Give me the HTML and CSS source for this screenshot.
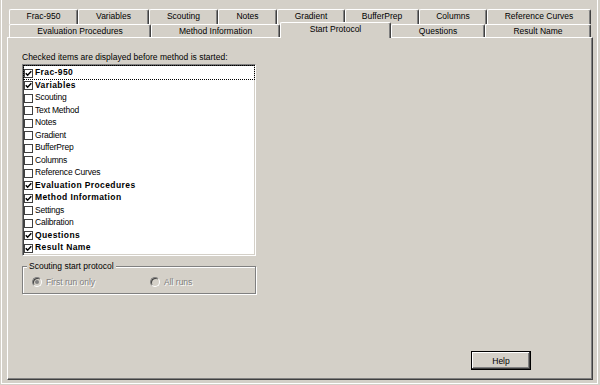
FILE: index.html
```html
<!DOCTYPE html>
<html>
<head>
  <title>Method Settings - Start Protocol</title>
  <link rel="stylesheet" href="styles.css">
</head>
<body>
  <div class="window">
    <div class="frame">

      <!-- Tab strip: back row first, the row holding the selected tab sits against the panel -->
      <div class="tabs">
        <div class="tab-row row-back">
          <div class="tab">Frac-950</div>
          <div class="tab">Variables</div>
          <div class="tab">Scouting</div>
          <div class="tab">Notes</div>
          <div class="tab">Gradient</div>
          <div class="tab">BufferPrep</div>
          <div class="tab">Columns</div>
          <div class="tab">Reference Curves</div>
        </div>
        <div class="tab-row row-front">
          <div class="tab">Evaluation Procedures</div>
          <div class="tab">Method Information</div>
          <div class="tab selected">Start Protocol</div>
          <div class="tab">Questions</div>
          <div class="tab">Result Name</div>
        </div>
      </div>

      <div class="panel">
        <div class="caption">Checked items are displayed before method is started:</div>

        <div class="listbox">
          <div class="item checked focused"><span class="check"><svg viewBox="0 0 7 7" width="7" height="7"><polyline points="0.8,3.2 2.6,5.2 6.3,1.2" fill="none" stroke="#000" stroke-width="1.5"/></svg></span><span class="label">Frac-950</span></div>
          <div class="item checked"><span class="check"><svg viewBox="0 0 7 7" width="7" height="7"><polyline points="0.8,3.2 2.6,5.2 6.3,1.2" fill="none" stroke="#000" stroke-width="1.5"/></svg></span><span class="label">Variables</span></div>
          <div class="item"><span class="check"></span><span class="label">Scouting</span></div>
          <div class="item"><span class="check"></span><span class="label">Text Method</span></div>
          <div class="item"><span class="check"></span><span class="label">Notes</span></div>
          <div class="item"><span class="check"></span><span class="label">Gradient</span></div>
          <div class="item"><span class="check"></span><span class="label">BufferPrep</span></div>
          <div class="item"><span class="check"></span><span class="label">Columns</span></div>
          <div class="item"><span class="check"></span><span class="label">Reference Curves</span></div>
          <div class="item checked"><span class="check"><svg viewBox="0 0 7 7" width="7" height="7"><polyline points="0.8,3.2 2.6,5.2 6.3,1.2" fill="none" stroke="#000" stroke-width="1.5"/></svg></span><span class="label">Evaluation Procedures</span></div>
          <div class="item checked"><span class="check"><svg viewBox="0 0 7 7" width="7" height="7"><polyline points="0.8,3.2 2.6,5.2 6.3,1.2" fill="none" stroke="#000" stroke-width="1.5"/></svg></span><span class="label">Method Information</span></div>
          <div class="item"><span class="check"></span><span class="label">Settings</span></div>
          <div class="item"><span class="check"></span><span class="label">Calibration</span></div>
          <div class="item checked"><span class="check"><svg viewBox="0 0 7 7" width="7" height="7"><polyline points="0.8,3.2 2.6,5.2 6.3,1.2" fill="none" stroke="#000" stroke-width="1.5"/></svg></span><span class="label">Questions</span></div>
          <div class="item checked"><span class="check"><svg viewBox="0 0 7 7" width="7" height="7"><polyline points="0.8,3.2 2.6,5.2 6.3,1.2" fill="none" stroke="#000" stroke-width="1.5"/></svg></span><span class="label">Result Name</span></div>
        </div>

        <fieldset class="group">
          <legend>Scouting start protocol</legend>
          <div class="options">
            <div class="option"><span class="radio on"></span>First run only</div>
            <div class="option"><span class="radio"></span>All runs</div>
          </div>
        </fieldset>

        <div class="buttons">
          <button class="btn default">Help</button>
        </div>
      </div>

    </div>
  </div>
</body>
</html>
```

FILE: styles.css
```css
body {
  margin: 0;
  background-color: #d4d0c8;
  font-family: "Liberation Sans", Arial, sans-serif;
  color: #000;
}

/* Outer dialog frame */
.window {
  width: 600px;
  height: 385px;
  box-sizing: border-box;
  padding: 0 2px 1px 1px;
}
.frame {
  height: 100%;
  box-sizing: border-box;
  border-left: 1px solid #fff;
  border-right: 1px solid #fff;
  border-bottom: 1px solid #fff;
  padding: 9px 4px 3px 5px;
  display: flex;
  flex-direction: column;
}

/* Tabs */
.tabs { margin: 0 2px; }
.tab-row { display: grid; }
.row-back { grid-template-columns: 69px 71px 69px 59px 68px 74px 68px 1fr; height: 15px; }
.row-front { grid-template-columns: 142px 129px 111px 94px 1fr; height: 13px; }

.tab {
  box-sizing: border-box;
  border-top: 1px solid #fff;
  border-left: 1px solid #fff;
  border-right: 1px solid #404040;
  border-radius: 2px 2px 0 0;
  box-shadow: inset -1px 0 #808080;
  background-color: #d4d0c8;
  text-align: center;
  font-size: 8.5px;
  line-height: 13px;
  white-space: nowrap;
}
.row-front .tab { line-height: 12px; }
.row-front .tab.selected {
  position: relative;
  z-index: 1;
  height: 16px;
  margin: -2px 0 -1px 0;
  line-height: 13px;
}

/* Page of the tab control */
.panel {
  flex: 1;
  display: flex;
  flex-direction: column;
  align-items: flex-start;
  border-top: 1px solid #fff;
  border-left: 1px solid #fff;
  border-right: 1px solid #404040;
  border-bottom: 1px solid #404040;
  box-shadow: inset -1px -1px #808080;
  padding: 14px 61px 9px 14px;
}
.caption { font-size: 8.5px; line-height: 11px; margin-bottom: 1px; white-space: nowrap; }

/* Check list box */
.listbox {
  width: 234px;
  box-sizing: border-box;
  border: 1px solid;
  border-color: #808080 #fff #fff #808080;
  box-shadow: inset 1px 1px #404040, inset -1px -1px #d4d0c8;
  background-color: #fff;
  padding: 1px;
}
.item {
  display: flex;
  align-items: center;
  height: 12.5px;
  font-size: 8.5px;
  letter-spacing: -0.2px;
  white-space: nowrap;
}
.item.checked .label { font-weight: bold; letter-spacing: 0.4px; }
.item.focused { outline: 1px dotted #000; }
.check {
  flex: none;
  width: 9px;
  height: 9px;
  box-sizing: border-box;
  border: 1px solid #404040;
  background-color: #fff;
  margin: 2px 2px 0 0;
  display: flex;
}
.check svg { display: block; }

/* Group box */
.group {
  margin: 5px 0 0 0;
  width: 234px;
  box-sizing: border-box;
  border: 1px solid #808080;
  box-shadow: inset 1px 1px #fff, 1px 1px #fff;
  padding: 4px 0 5px 4px;
}
.group legend {
  padding: 0 2px;
  font-size: 8.5px;
  line-height: 11px;
  background-color: #d4d0c8;
}
.options {
  display: grid;
  grid-template-columns: 118px auto;
  margin-left: 5px;
}
.option {
  display: flex;
  align-items: center;
  gap: 4px;
  height: 12px;
  font-size: 8.5px;
  color: #808080;
  text-shadow: 1px 1px #fff;
}
.radio {
  width: 10px;
  height: 10px;
  box-sizing: border-box;
  border: 1px solid;
  border-color: #808080 #fff #fff #808080;
  border-radius: 50%;
  box-shadow: inset 1px 1px #404040;
  background-color: #d4d0c8;
  display: grid;
  place-items: center;
}
.radio.on:after {
  content: "";
  width: 4px;
  height: 4px;
  border-radius: 50%;
  background-color: #808080;
}

/* Buttons */
.buttons { margin-top: auto; align-self: stretch; display: flex; justify-content: flex-end; }
.btn {
  width: 60px;
  height: 19px;
  box-sizing: border-box;
  padding: 0;
  border: 1px solid #000;
  background-color: #d4d0c8;
  box-shadow: inset -1px -1px #404040, inset 1px 1px #fff, inset -2px -2px #808080;
  font-family: "Liberation Sans", Arial, sans-serif;
  font-size: 8.5px;
  color: #000;
}
```
